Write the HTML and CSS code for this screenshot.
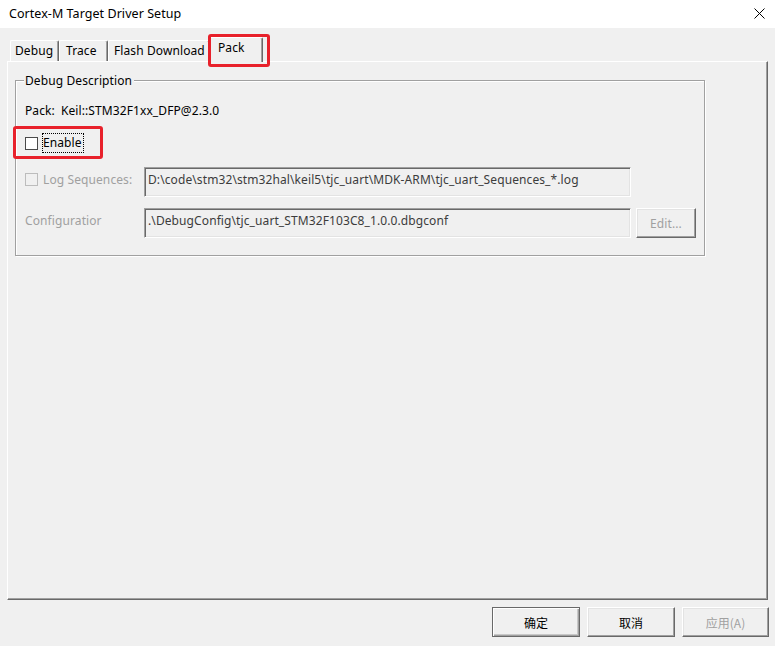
FILE: index.html
```html
<!DOCTYPE html>
<html lang="zh">
<head>
<meta charset="utf-8">
<title>Cortex-M Target Driver Setup</title>
<link rel="stylesheet" href="styles.css">
</head>
<body>
<div class="window">
  <div class="titlebar">
    <span class="title">Cortex-M Target Driver Setup</span>
    <svg class="close" width="11" height="11" viewBox="0 0 11 11"><path d="M0.5 0.5 L10.5 10.5 M10.5 0.5 L0.5 10.5" stroke="#000" stroke-width="1" fill="none"/></svg>
  </div>
  <div class="client">
    <div class="tabs">
      <div class="tab tab-debug">Debug</div>
      <div class="tab tab-trace">Trace</div>
      <div class="tab tab-flash">Flash Download</div>
      <div class="tab tab-pack selected">Pack<span class="mark mark-tab"></span></div>
    </div>
    <div class="panel">
      <div class="group">
        <span class="group-title">Debug Description</span>
        <div class="row row-pack"><span class="pack-label">Pack:</span><span>Keil::STM32F1xx_DFP@2.3.0</span></div>
        <div class="row row-enable">
          <span class="check"></span>
          <span class="focus">Enable</span>
          <span class="mark mark-enable"></span>
        </div>
        <div class="row row-field">
          <span class="check disabled"></span>
          <span class="label label-log disabled-text">Log Sequences:</span>
          <div class="edit">D:\code\stm32\stm32hal\keil5\tjc_uart\MDK-ARM\tjc_uart_Sequences_*.log</div>
        </div>
        <div class="row row-field row-config">
          <span class="label label-config disabled-text">Configuratior</span>
          <div class="edit">.\DebugConfig\tjc_uart_STM32F103C8_1.0.0.dbgconf</div>
          <div class="btn btn-edit">Edit...</div>
        </div>
      </div>
    </div>
    <div class="footer">
      <div class="btn btn-dlg default">确定</div>
      <div class="btn btn-dlg">取消</div>
      <div class="btn btn-dlg disabled-btn">应用(<u>A</u>)</div>
    </div>
  </div>
</div>
</body>
</html>
```
FILE: styles.css
```css
* { box-sizing: border-box; }
html, body { margin: 0; padding: 0; }
body {
  width: 775px;
  height: 646px;
  background: #f0f0f0;
  font-family: "Noto Sans", "Noto Sans CJK SC", sans-serif;
  font-size: 12px;
  letter-spacing: 0.1px;
  color: #000;
  overflow: hidden;
}
.window { width: 775px; height: 646px; display: flex; flex-direction: column; }
.titlebar {
  height: 28px;
  background: #fff;
  display: flex;
  align-items: center;
  justify-content: space-between;
  padding: 0 10px 2px 9px;
}
.title { font-size: 12.5px; color: #000; letter-spacing: 0.05px; }
.close { display: block; }

.client { flex: 1; padding: 9px 0 0 7px; display: flex; flex-direction: column; }

.tabs { display: flex; align-items: flex-end; padding-left: 3px; height: 24px; position: relative; z-index: 2; }
.tab {
  height: 21px;
  border-top: 1px solid #fff;
  border-left: 1px solid #fff;
  border-right: 1px solid #696969;
  box-shadow: inset -1px 0 0 #a0a0a0;
  border-top-left-radius: 2px;
  border-top-right-radius: 2px;
  padding-left: 4px;
  line-height: 19px;
  white-space: nowrap;
  background: #f0f0f0;
}
.tab-debug { width: 49px; }
.tab-trace { width: 49px; padding-left: 6px; }
.tab-flash { width: 102px; padding-left: 5px; }
.tab.selected {
  position: relative;
  width: 54px;
  height: 25px;
  margin-left: -1px;
  margin-bottom: -1px;
  padding-left: 8px;
  line-height: 20px;
}
.mark {
  position: absolute;
  border: 3px solid #e8212b;
  border-radius: 3px;
  pointer-events: none;
}
.mark-tab { left: -2px; top: -4px; width: 62px; height: 33px; }

.panel {
  width: 761px;
  height: 539px;
  border-top: 1px solid #fff;
  border-left: 1px solid #fff;
  border-right: 1px solid #696969;
  border-bottom: 1px solid #696969;
  box-shadow: inset -1px -1px 0 #a0a0a0;
  padding: 18px 0 0 7px;
}

.group {
  position: relative;
  width: 690px;
  height: 176px;
  border: 1px solid #a0a0a0;
  box-shadow: 1px 1px 0 #fff, inset 1px 1px 0 #fff;
  padding: 21px 0 0 9px;
}
.group-title {
  position: absolute;
  left: 8px;
  top: -9px;
  padding: 0 2px 0 1px;
  background: #f0f0f0;
  line-height: 18px;
}

.row { display: flex; align-items: center; position: relative; }
.row-pack { height: 16px; }
.pack-label { margin-right: 6px; }
.row-enable { height: 20px; margin-top: 15px; }
.row-field { height: 30px; margin-top: 14px; align-items: flex-start; }
.row-config { margin-top: 11px; }

.check {
  width: 13px;
  height: 13px;
  border: 1px solid #4a4a4a;
  background: #fff;
  flex: none;
  margin-right: 5px;
}
.row-field .check { margin-top: 6px; }
.check.disabled { border-color: #bcbcbc; background: #f0f0f0; }
.focus {
  outline: 1px dotted #000;
  outline-offset: 0;
  padding: 0 1px 0 0;
  line-height: 18px;
}
.mark-enable { left: -12px; top: -7px; width: 90px; height: 33px; }

.disabled-text { color: #a0a0a0; }
.label { flex: none; line-height: 17px; margin-top: 4px; }
.label-log { width: 101px; }
.label-config { width: 119px; }

.edit {
  width: 487px;
  height: 30px;
  border-top: 1px solid #a0a0a0;
  border-left: 1px solid #a0a0a0;
  border-right: 1px solid #fff;
  border-bottom: 1px solid #fff;
  box-shadow: inset 1px 1px 0 #696969, inset -1px -1px 0 #e3e3e3;
  padding: 3px 0 0 3px;
  color: #3c3c3c;
  white-space: nowrap;
  overflow: hidden;
  flex: none;
  line-height: 17px;
}

.btn {
  display: flex;
  align-items: center;
  justify-content: center;
  border-top: 1px solid #fff;
  border-left: 1px solid #fff;
  border-right: 1px solid #696969;
  border-bottom: 1px solid #696969;
  box-shadow: inset -1px -1px 0 #a0a0a0, inset 1px 1px 0 #e3e3e3;
  background: #f0f0f0;
  flex: none;
}
.btn-edit {
  width: 60px;
  height: 30px;
  margin-left: 5px;
  color: #a0a0a0;
}
.footer {
  display: flex;
  padding: 7px 0 0 485px;
}
.btn-dlg { width: 88px; height: 30px; margin-right: 7px; font-family: "Noto Sans CJK SC", sans-serif; letter-spacing: 0; }
.btn-dlg.default {
  border: 1px solid #696969;
  box-shadow: inset 1px 1px 0 #fff, inset -1px -1px 0 #a0a0a0, inset -2px -2px 0 #c8c8c8;
}
.disabled-btn { color: #a0a0a0; margin-right: 0; width: 87px; }
.disabled-btn u { text-decoration: none; }
```
